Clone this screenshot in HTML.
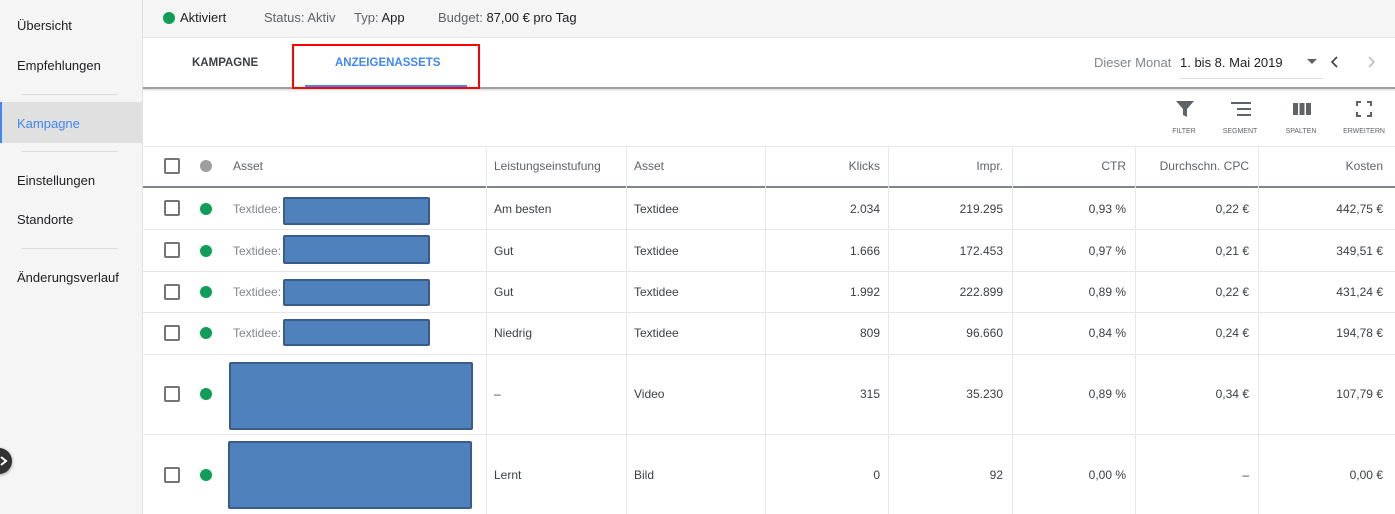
<!DOCTYPE html>
<html><head><meta charset="utf-8">
<style>
*{box-sizing:border-box;margin:0;padding:0}
body{width:1395px;height:514px;overflow:hidden;background:#fff;font-family:"Liberation Sans",Arial,sans-serif;color:#3c4043;position:relative}
.a{position:absolute;white-space:nowrap}
.side{left:0;top:0;width:143px;height:514px;background:#f5f5f5;border-right:1px solid #e0e0e0}
.si{font-size:13px;color:#202124;left:17px}
.div{height:1px;background:#ddd;left:22px;width:96px}
.top{left:143px;top:0;width:1252px;height:38px;background:#f5f5f5;border-bottom:1px solid #e6e6e6}
.t13{font-size:13px}
.hd{font-size:12px;color:#5f6368}
.cell{font-size:12px;color:#3c4043}
.r{text-align:right}
.vl{width:1px;background:#e8e8e8}
.hl{height:1px;background:#e6e6e6;left:143px;width:1252px}
.cb{width:16px;height:16px;border:2px solid #757575;border-radius:2px;left:164px}
.dot{width:12px;height:12px;border-radius:50%;background:#0f9d58;left:200px}
.blue{background:#4f81bd;border:2px solid #385d8a;border-radius:2px}
.tl{font-size:7px;color:#5f6368;width:60px;text-align:center;top:128px}
</style></head><body>
<div class="a side"></div>
<div class="a si" style="top:18px">Übersicht</div>
<div class="a si" style="top:58px">Empfehlungen</div>
<div class="a div" style="top:94px"></div>
<div class="a" style="left:0;top:102px;width:142px;height:41px;background:#e0e0e0;border-left:2px solid #4285f4"></div>
<div class="a si" style="top:116px;color:#4285f4">Kampagne</div>
<div class="a div" style="top:151px"></div>
<div class="a si" style="top:173px">Einstellungen</div>
<div class="a si" style="top:212px">Standorte</div>
<div class="a div" style="top:248px"></div>
<div class="a si" style="top:270px">Änderungsverlauf</div>
<div class="a" style="left:-14px;top:448px;width:26px;height:26px;border-radius:50%;background:#333;box-shadow:0 1px 3px rgba(0,0,0,.4)"></div>
<svg class="a" style="left:0;top:455px" width="10" height="12"><path d="M1 2l5 4-5 4" stroke="#fff" stroke-width="2" fill="none"/></svg>

<div class="a top"></div>
<div class="a dot" style="left:163px;top:12px"></div>
<div class="a t13" style="left:180px;top:10px;color:#202124">Aktiviert</div>
<div class="a t13" style="left:264px;top:10px;color:#5f6368">Status: Aktiv</div>
<div class="a t13" style="left:354px;top:10px;color:#5f6368">Typ: <span style="color:#202124">App</span></div>
<div class="a t13" style="left:438px;top:10px;color:#5f6368">Budget: <span style="color:#202124">87,00 € pro Tag</span></div>

<div class="a" style="left:143px;top:87px;width:1252px;height:2px;background:#9e9e9e;box-shadow:0 1px 2px rgba(0,0,0,.2)"></div>
<div class="a" style="left:192px;top:57px;font-size:11.5px;font-weight:bold;color:#3c4043">KAMPAGNE</div>
<div class="a" style="left:335px;top:57px;font-size:11.5px;font-weight:bold;color:#4285f4">ANZEIGENASSETS</div>
<div class="a" style="left:305px;top:85px;width:162px;height:2px;background:#4285f4"></div>
<div class="a" style="left:292px;top:44px;width:188px;height:45px;border:2px solid #f00"></div>
<div class="a t13" style="left:1094px;top:55px;color:#80868b">Dieser Monat</div>
<div class="a t13" style="left:1180px;top:55px;color:#202124">1. bis 8. Mai 2019</div>
<div class="a" style="left:1179px;top:78px;width:144px;height:1px;background:#e0e0e0"></div>
<svg class="a" style="left:1306px;top:58px" width="12" height="8"><path d="M1 1h10L6 6z" fill="#5f6368"/></svg>
<svg class="a" style="left:1330px;top:55px" width="10" height="14"><path d="M7 2L2 7l5 5" stroke="#3c4043" stroke-width="1.6" fill="none"/></svg>
<svg class="a" style="left:1366px;top:55px" width="10" height="14"><path d="M3 2l5 5-5 5" stroke="#bdbdbd" stroke-width="1.6" fill="none"/></svg>

<svg class="a" style="left:1175px;top:100px" width="20" height="18"><path d="M1 1h18l-7 8v8l-4-2V9z" fill="#5f6368"/></svg>
<div class="a tl" style="left:1154px">FILTER</div>
<svg class="a" style="left:1230px;top:101px" width="22" height="16"><path d="M1 2h20M7 8h14M7 14h14" stroke="#5f6368" stroke-width="2"/></svg>
<div class="a tl" style="left:1210px">SEGMENT</div>
<svg class="a" style="left:1292px;top:102px" width="20" height="14"><path d="M1 1h5v12H1zM7.5 1h5v12h-5zM14 1h5v12h-5z" fill="#5f6368"/></svg>
<div class="a tl" style="left:1271px">SPALTEN</div>
<svg class="a" style="left:1356px;top:101px" width="16" height="16"><path d="M1 5V1h4M11 1h4v4M15 11v4h-4M5 15H1v-4" stroke="#5f6368" stroke-width="2" fill="none"/></svg>
<div class="a tl" style="left:1334px">ERWEITERN</div>

<div class="a hl" style="top:146px"></div>
<div class="a" style="left:143px;top:186px;width:1252px;height:2px;background:#80868b"></div>
<div class="a hl" style="top:229px"></div>
<div class="a hl" style="top:271px"></div>
<div class="a hl" style="top:312px"></div>
<div class="a hl" style="top:354px"></div>
<div class="a hl" style="top:434px"></div>
<div class="a vl" style="left:486px;top:146px;height:368px"></div>
<div class="a vl" style="left:626px;top:146px;height:368px"></div>
<div class="a vl" style="left:765px;top:146px;height:368px"></div>
<div class="a vl" style="left:888px;top:146px;height:368px"></div>
<div class="a vl" style="left:1012px;top:146px;height:368px"></div>
<div class="a vl" style="left:1135px;top:146px;height:368px"></div>
<div class="a vl" style="left:1258px;top:146px;height:368px"></div>

<div class="a cb" style="top:158px"></div>
<div class="a dot" style="top:160px;background:#9e9e9e"></div>
<div class="a hd" style="left:233px;top:159px">Asset</div>
<div class="a hd" style="left:494px;top:159px">Leistungseinstufung</div>
<div class="a hd" style="left:634px;top:159px">Asset</div>
<div class="a hd r" style="left:770px;width:110px;top:159px">Klicks</div>
<div class="a hd r" style="left:893px;width:110px;top:159px">Impr.</div>
<div class="a hd r" style="left:1016px;width:110px;top:159px">CTR</div>
<div class="a hd r" style="left:1139px;width:110px;top:159px">Durchschn. CPC</div>
<div class="a hd r" style="left:1263px;width:120px;top:159px">Kosten</div>

<div class="a cb" style="top:200px"></div><div class="a dot" style="top:203px"></div>
<div class="a cell" style="left:233px;top:202px;color:#80868b">Textidee:</div>
<div class="a blue" style="left:283px;top:197px;width:147px;height:28px"></div>
<div class="a cell" style="left:494px;top:202px">Am besten</div><div class="a cell" style="left:634px;top:202px">Textidee</div>
<div class="a cell r" style="left:770px;width:110px;top:202px">2.034</div><div class="a cell r" style="left:893px;width:110px;top:202px">219.295</div><div class="a cell r" style="left:1016px;width:110px;top:202px">0,93 %</div><div class="a cell r" style="left:1139px;width:110px;top:202px">0,22 €</div><div class="a cell r" style="left:1263px;width:120px;top:202px">442,75 €</div>

<div class="a cb" style="top:242px"></div><div class="a dot" style="top:245px"></div>
<div class="a cell" style="left:233px;top:244px;color:#80868b">Textidee:</div>
<div class="a blue" style="left:283px;top:235px;width:147px;height:29px"></div>
<div class="a cell" style="left:494px;top:244px">Gut</div><div class="a cell" style="left:634px;top:244px">Textidee</div>
<div class="a cell r" style="left:770px;width:110px;top:244px">1.666</div><div class="a cell r" style="left:893px;width:110px;top:244px">172.453</div><div class="a cell r" style="left:1016px;width:110px;top:244px">0,97 %</div><div class="a cell r" style="left:1139px;width:110px;top:244px">0,21 €</div><div class="a cell r" style="left:1263px;width:120px;top:244px">349,51 €</div>

<div class="a cb" style="top:284px"></div><div class="a dot" style="top:286px"></div>
<div class="a cell" style="left:233px;top:285px;color:#80868b">Textidee:</div>
<div class="a blue" style="left:283px;top:279px;width:147px;height:27px"></div>
<div class="a cell" style="left:494px;top:285px">Gut</div><div class="a cell" style="left:634px;top:285px">Textidee</div>
<div class="a cell r" style="left:770px;width:110px;top:285px">1.992</div><div class="a cell r" style="left:893px;width:110px;top:285px">222.899</div><div class="a cell r" style="left:1016px;width:110px;top:285px">0,89 %</div><div class="a cell r" style="left:1139px;width:110px;top:285px">0,22 €</div><div class="a cell r" style="left:1263px;width:120px;top:285px">431,24 €</div>

<div class="a cb" style="top:325px"></div><div class="a dot" style="top:327px"></div>
<div class="a cell" style="left:233px;top:326px;color:#80868b">Textidee:</div>
<div class="a blue" style="left:283px;top:319px;width:147px;height:27px"></div>
<div class="a cell" style="left:494px;top:326px">Niedrig</div><div class="a cell" style="left:634px;top:326px">Textidee</div>
<div class="a cell r" style="left:770px;width:110px;top:326px">809</div><div class="a cell r" style="left:893px;width:110px;top:326px">96.660</div><div class="a cell r" style="left:1016px;width:110px;top:326px">0,84 %</div><div class="a cell r" style="left:1139px;width:110px;top:326px">0,24 €</div><div class="a cell r" style="left:1263px;width:120px;top:326px">194,78 €</div>

<div class="a cb" style="top:386px"></div><div class="a dot" style="top:388px"></div>
<div class="a blue" style="left:229px;top:362px;width:244px;height:68px"></div>
<div class="a cell" style="left:494px;top:387px">–</div><div class="a cell" style="left:634px;top:387px">Video</div>
<div class="a cell r" style="left:770px;width:110px;top:387px">315</div><div class="a cell r" style="left:893px;width:110px;top:387px">35.230</div><div class="a cell r" style="left:1016px;width:110px;top:387px">0,89 %</div><div class="a cell r" style="left:1139px;width:110px;top:387px">0,34 €</div><div class="a cell r" style="left:1263px;width:120px;top:387px">107,79 €</div>

<div class="a cb" style="top:467px"></div><div class="a dot" style="top:469px"></div>
<div class="a blue" style="left:228px;top:441px;width:244px;height:68px"></div>
<div class="a cell" style="left:494px;top:468px">Lernt</div><div class="a cell" style="left:634px;top:468px">Bild</div>
<div class="a cell r" style="left:770px;width:110px;top:468px">0</div><div class="a cell r" style="left:893px;width:110px;top:468px">92</div><div class="a cell r" style="left:1016px;width:110px;top:468px">0,00 %</div><div class="a cell r" style="left:1139px;width:110px;top:468px">–</div><div class="a cell r" style="left:1263px;width:120px;top:468px">0,00 €</div>
</body></html>
